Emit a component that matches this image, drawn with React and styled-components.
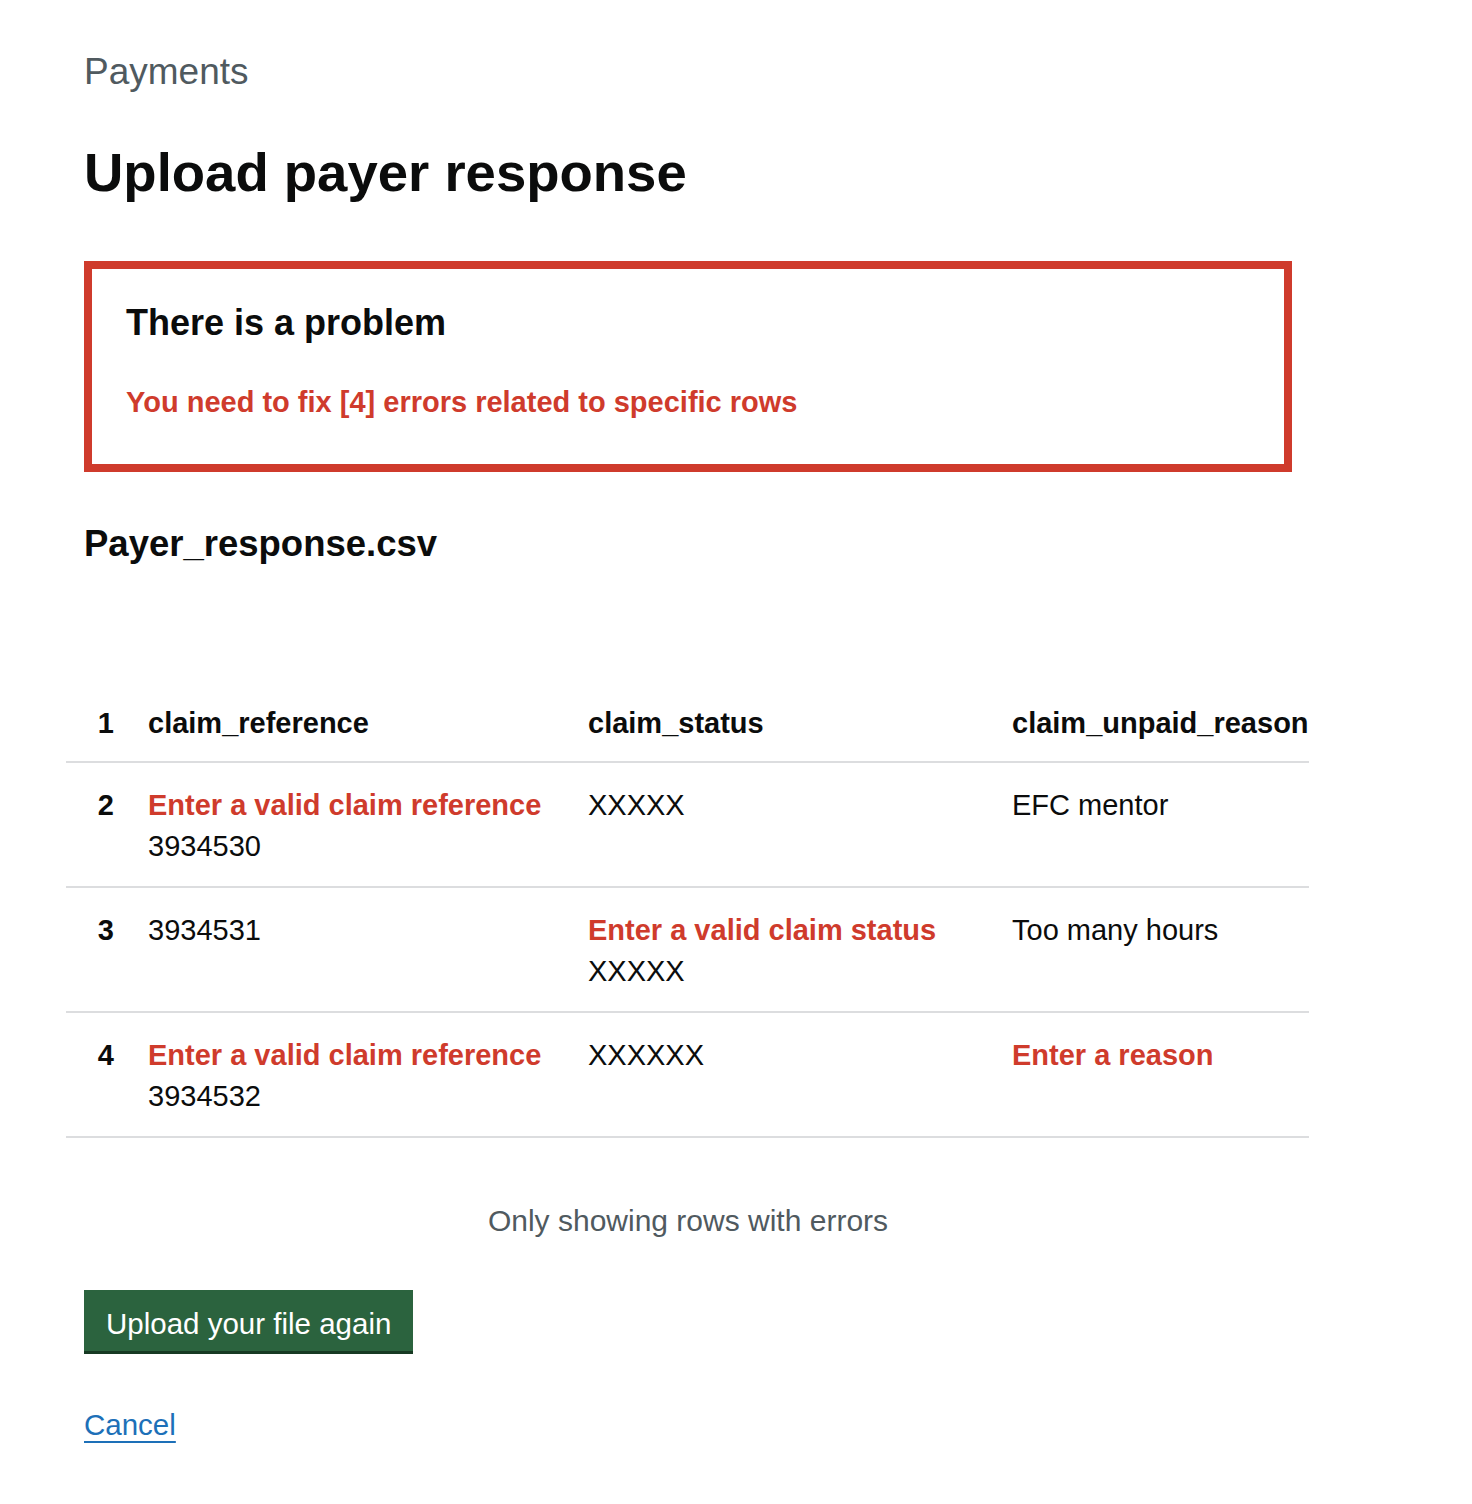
import React from "react";
import styled, { createGlobalStyle } from "styled-components";

const GlobalStyle = createGlobalStyle`
  html, body {
    margin: 0;
    padding: 0;
    background: #ffffff;
  }
  body {
    font-family: "Liberation Sans", Arial, sans-serif;
    color: #0b0c0c;
    -webkit-font-smoothing: antialiased;
  }
`;

const RED = "#cf3b2c";

const Page = styled.main`
  width: 1208px;
  padding: 52px 0 60px 84px;
`;

const Caption = styled.span`
  display: block;
  margin: 0 0 51px;
  font-size: 37px;
  line-height: 40px;
  color: #505a5f;
`;

const Title = styled.h1`
  margin: 0 0 58px;
  font-size: 54.5px;
  line-height: 60px;
  font-weight: 700;
`;

const ErrorSummary = styled.div`
  border: 8px solid ${RED};
  padding: 34px 34px 43px 34px;
`;

const ErrorTitle = styled.h2`
  margin: 0 0 40px;
  font-size: 36px;
  line-height: 40px;
  font-weight: 700;
`;

const ErrorList = styled.ul`
  margin: 0;
  padding: 0;
  list-style: none;
`;

const ErrorItem = styled.li`
  font-size: 29px;
  line-height: 38px;
  font-weight: 700;
  color: ${RED};
`;

const FileName = styled.h2`
  margin: 52px 0 117px;
  font-size: 36.5px;
  line-height: 40px;
  font-weight: 700;
`;

const Table = styled.table`
  width: 1243px;
  margin: 0 -18px;
  border-collapse: collapse;
  table-layout: fixed;
  font-size: 29px;
  line-height: 41px;
`;

const Row = styled.tr`
  border-bottom: 2px solid #dcdddf;
`;

const HeadCell = styled.th`
  padding: 22px 0 17px;
  text-align: left;
  font-weight: 700;
  white-space: nowrap;
  vertical-align: top;
`;

const NumCell = styled.td`
  padding: ${(p) => (p.$head ? "22px 34px 17px 0" : "22px 34px 19px 0")};
  text-align: right;
  font-weight: 700;
  vertical-align: top;
`;

const Cell = styled.td`
  padding: 22px 0 19px;
  vertical-align: top;
  color: #0b0c0c;
`;

const CellError = styled.span`
  display: block;
  color: ${RED};
  font-weight: 700;
`;

const Note = styled.p`
  margin: 62px 0 0;
  text-align: center;
  font-size: 30px;
  line-height: 41px;
  color: #505a5f;
`;

const Button = styled.button`
  display: inline-block;
  margin: 49px 0 0;
  padding: 14px 22px 8px;
  border: none;
  border-radius: 0;
  background: #2b633e;
  color: #ffffff;
  font-family: "Liberation Sans", Arial, sans-serif;
  font-size: 29.5px;
  line-height: 39px;
  box-shadow: 0 3px 0 #173a23;
  cursor: pointer;
`;

const LinkLine = styled.p`
  margin: 53px 0 0;
  font-size: 29.5px;
  line-height: 41px;
`;

const Link = styled.a`
  color: #1d70b8;
  text-decoration: underline;
  text-decoration-thickness: 2px;
  text-underline-offset: 6px;
`;

const rows = [
  {
    n: 2,
    ref: { error: "Enter a valid claim reference", value: "3934530" },
    status: { value: "XXXXX" },
    reason: { value: "EFC mentor" },
  },
  {
    n: 3,
    ref: { value: "3934531" },
    status: { error: "Enter a valid claim status", value: "XXXXX" },
    reason: { value: "Too many hours" },
  },
  {
    n: 4,
    ref: { error: "Enter a valid claim reference", value: "3934532" },
    status: { value: "XXXXXX" },
    reason: { error: "Enter a reason" },
  },
];

function DataCell({ data }) {
  return (
    <Cell>
      {data.error && <CellError>{data.error}</CellError>}
      {data.value}
    </Cell>
  );
}

export default function App() {
  return (
    <>
      <GlobalStyle />
      <Page>
        <Caption>Payments</Caption>
        <Title>Upload payer response</Title>
        <ErrorSummary>
          <ErrorTitle>There is a problem</ErrorTitle>
          <ErrorList>
            <ErrorItem>You need to fix [4] errors related to specific rows</ErrorItem>
          </ErrorList>
        </ErrorSummary>
        <FileName>Payer_response.csv</FileName>
        <Table>
          <colgroup>
            <col style={{ width: 82 }} />
            <col style={{ width: 440 }} />
            <col style={{ width: 424 }} />
            <col />
          </colgroup>
          <thead>
            <Row>
              <NumCell $head as="th">1</NumCell>
              <HeadCell>claim_reference</HeadCell>
              <HeadCell>claim_status</HeadCell>
              <HeadCell>claim_unpaid_reason</HeadCell>
            </Row>
          </thead>
          <tbody>
            {rows.map((r) => (
              <Row key={r.n}>
                <NumCell>{r.n}</NumCell>
                <DataCell data={r.ref} />
                <DataCell data={r.status} />
                <DataCell data={r.reason} />
              </Row>
            ))}
          </tbody>
        </Table>
        <Note>Only showing rows with errors</Note>
        <Button type="button">Upload your file again</Button>
        <LinkLine>
          <Link href="#">Cancel</Link>
        </LinkLine>
      </Page>
    </>
  );
}
